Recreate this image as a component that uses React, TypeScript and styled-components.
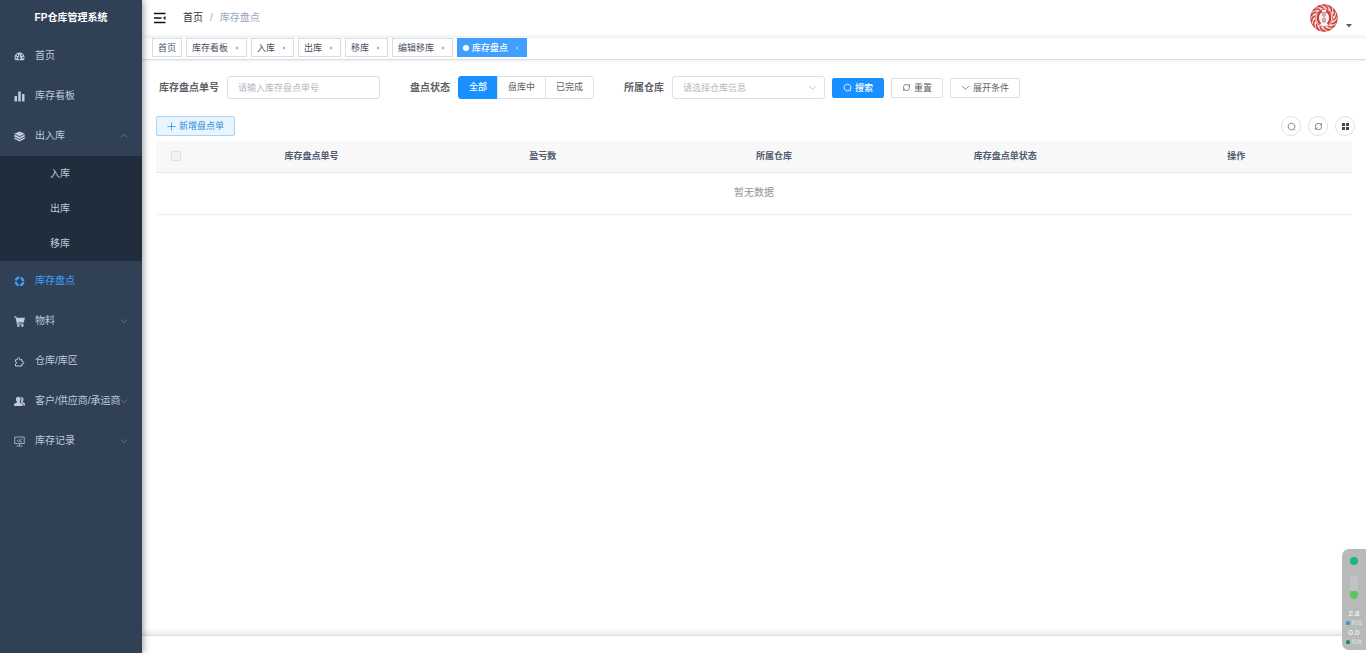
import React from "react";
import styled, { createGlobalStyle, css } from "styled-components";

const GlobalStyle = createGlobalStyle`
  * { box-sizing: border-box; }
  body {
    margin: 0;
    background: #fff;
    color: #606266;
    font-family: "Liberation Sans", "Noto Sans CJK SC", sans-serif;
    font-size: 10px;
    line-height: 14px;
  }
  button, input, select { font-family: inherit; }
  ul, ol { list-style: none; margin: 0; padding: 0; }
  a { color: inherit; text-decoration: none; }
  svg { display: block; flex: none; }
`;

/* ---------- shell ---------- */

const Shell = styled.div`
  display: flex;
  min-height: 100vh;
`;

const Sidebar = styled.aside`
  flex: 0 0 142px;
  min-width: 0;
  z-index: 2;
  background: #304156;
  color: #bfcbd9;
  box-shadow: 2px 0 6px rgba(0, 21, 41, 0.35);
`;

const Brand = styled.h1`
  margin: 0;
  height: 36px;
  color: #fff;
  font-size: 10px;
  font-weight: 700;
  line-height: 36px;
  text-align: center;
`;

const MenuLink = styled.a<{ $active?: boolean }>`
  display: flex;
  align-items: center;
  height: 40px;
  padding: 0 14px;
  color: ${(p) => (p.$active ? "#409eff" : "#bfcbd9")};
  white-space: nowrap;
`;

const MenuText = styled.span`
  flex: 1 1 0;
  min-width: 0;
  margin-left: 10px;
`;

const MenuArrow = styled.span`
  color: #74849a;
`;

const SubMenu = styled.ul`
  background: #1f2d3d;
`;

const SubLink = styled.a`
  display: block;
  height: 35px;
  padding-left: 50px;
  line-height: 35px;
`;

const Main = styled.div`
  display: flex;
  flex: 1 1 0;
  flex-direction: column;
  min-width: 0;
`;

/* ---------- top bars ---------- */

const NavBar = styled.header`
  display: flex;
  align-items: center;
  height: 36px;
  padding: 0 14px 0 12px;
  box-shadow: 0 1px 3px rgba(0, 21, 41, 0.1);
`;

const IconButton = styled.button`
  display: flex;
  padding: 0;
  border: 0;
  background: none;
  color: #111;
`;

const Crumbs = styled.ol`
  display: flex;
  flex: 1;
  gap: 7px;
  margin-left: 17px;
  color: #97a8be;
`;

const CrumbHome = styled.a`
  color: #303133;
`;

const CrumbSlash = styled.li`
  color: #a8acb4;
`;

const UserButton = styled(IconButton)`
  align-items: flex-end;
  gap: 8px;
  color: #5a5e66;
`;

const TagBar = styled.nav`
  display: flex;
  align-items: center;
  gap: 4px;
  height: 24px;
  padding: 0 10px;
  border-bottom: 1px solid #d8dce5;
  box-shadow: 0 1px 3px rgba(0, 0, 0, 0.08);
`;

const Tag = styled.div<{ $active?: boolean }>`
  display: flex;
  align-items: center;
  height: 19px;
  padding: 0 5px;
  border: 1px solid #d8dce5;
  color: #495060;
  font-size: 9px;
  white-space: nowrap;
  ${(p) =>
    p.$active &&
    css`
      border-color: #409eff;
      background: #409eff;
      color: #fff;
      font-weight: 500;
    `}
`;

const TagDot = styled.span`
  width: 6px;
  height: 6px;
  margin-right: 3px;
  border-radius: 50%;
  background: #fff;
`;

const TagClose = styled.button`
  display: flex;
  margin: 0 0 0 5px;
  padding: 2px;
  border: 0;
  background: none;
  color: inherit;
  opacity: 0.7;
`;

/* ---------- filter form ---------- */

const Content = styled.main`
  flex: 1;
  padding: 16px 14px 0;
`;

const Filters = styled.form`
  display: flex;
  flex-wrap: wrap;
  align-items: center;
  gap: 8px 30px;
  padding-left: 3px;
`;

const Field = styled.div`
  display: flex;
  align-items: center;
  gap: 8px;
`;

const fieldLabel = css`
  color: #606266;
  font-size: 10px;
  font-weight: 700;
`;

const FieldLabel = styled.label`
  ${fieldLabel}
`;

const GroupLabel = styled.span`
  ${fieldLabel}
`;

const control = css`
  width: 153px;
  height: 23px;
  padding: 0 10px;
  border: 1px solid #dcdfe6;
  border-radius: 3px;
  background: #fff;
  font-size: 9px;
`;

const TextInput = styled.input`
  ${control}
  &::placeholder {
    color: #b4b8c0;
    opacity: 1;
  }
`;

const SelectBox = styled.div`
  display: grid;
  align-items: center;
  > * {
    grid-area: 1 / 1;
  }
  > svg {
    justify-self: end;
    margin-right: 8px;
    color: #b4b8c0;
    pointer-events: none;
  }
`;

const Select = styled.select`
  ${control}
  appearance: none;
  color: #b4b8c0;
`;

const RadioGroup = styled.div`
  display: flex;
`;

const RadioOption = styled.label`
  position: relative;
  height: 23px;
  margin-left: -1px;
  padding: 0 10px;
  border: 1px solid #dcdfe6;
  background: #fff;
  font-size: 9px;
  line-height: 21px;
  &:first-child {
    margin-left: 0;
    border-radius: 3px 0 0 3px;
  }
  &:last-child {
    border-radius: 0 3px 3px 0;
  }
  &:has(input:checked) {
    border-color: #1890ff;
    background: #1890ff;
    color: #fff;
    font-weight: 500;
  }
`;

const RadioInput = styled.input`
  position: absolute;
  inset: 0;
  margin: 0;
  opacity: 0;
`;

const Actions = styled.div`
  display: flex;
  gap: 7px;
`;

const FilterEnd = styled.div`
  display: flex;
  flex-wrap: wrap;
  align-items: center;
  gap: 7px;
`;

type Tone = "primary" | "plain" | "default";

const tones: Record<Tone, ReturnType<typeof css>> = {
  primary: css`
    border-color: #1890ff;
    background: #1890ff;
    color: #fff;
    font-weight: 500;
  `,
  plain: css`
    border-color: #a9d3ee;
    background: #e8f4ff;
    color: #2d8fd6;
  `,
  default: css`
    border-color: #dcdfe6;
    background: #fff;
    color: #606266;
  `,
};

const Button = styled.button<{ $tone?: Tone }>`
  display: flex;
  align-items: center;
  gap: 3px;
  height: 20px;
  padding: 0 10px;
  border: 1px solid;
  border-radius: 2px;
  font-size: 9px;
  line-height: 14px;
  white-space: nowrap;
  ${(p) => tones[p.$tone ?? "default"]}
`;

/* ---------- table ---------- */

const Toolbar = styled.div`
  display: flex;
  align-items: center;
  justify-content: space-between;
  margin: 17px -3px 5px 0;
`;

const ToolGroup = styled.div`
  display: flex;
  gap: 7px;
`;

const RoundButton = styled.button`
  display: flex;
  align-items: center;
  justify-content: center;
  width: 20px;
  height: 20px;
  padding: 0;
  border: 1px solid #e0e1e4;
  border-radius: 50%;
  background: #fff;
  color: #606266;
`;

const Table = styled.table`
  width: 100%;
  border-collapse: collapse;
  table-layout: fixed;
`;

const HeadCell = styled.th`
  height: 31px;
  padding: 0;
  border-bottom: 1px solid #dfe6ec;
  background: #f8f8f9;
  color: #515a6e;
  font-size: 9px;
  font-weight: 700;
`;

const CheckCell = styled(HeadCell)`
  width: 40px;
`;

const CheckBox = styled.input`
  display: block;
  appearance: none;
  width: 10px;
  height: 10px;
  margin: 0 auto;
  border: 1px solid #dcdfe9;
  border-radius: 1px;
  background: #eff1fb;
`;

const EmptyCell = styled.td`
  height: 42px;
  padding: 0;
  border-bottom: 1px solid #ebeef5;
  color: #909399;
  text-align: center;
`;

const Footer = styled.footer`
  height: 18px;
  border-top: 1px solid #dcdee0;
  box-shadow: 0 -2px 6px rgba(0, 21, 41, 0.12);
`;

/* ---------- floating network meter ---------- */

const Meter = styled.aside`
  position: fixed;
  right: 0;
  bottom: 3px;
  z-index: 3;
  display: flex;
  flex-direction: column;
  align-items: center;
  width: 24px;
  height: 101px;
  padding-top: 8px;
  border-radius: 7px 0 0 7px;
  background: #b8baba;
  color: #fff;
  font-size: 8px;
  line-height: 10px;
`;

const MeterDot = styled.span`
  width: 8px;
  height: 8px;
  border-radius: 50%;
  background: #16b777;
`;

const MeterTube = styled.span`
  display: flex;
  align-items: flex-end;
  width: 8px;
  height: 24px;
  margin: 10px 0;
  border-radius: 4px;
  background: #c1c2c3;
  overflow: hidden;
  &::after {
    content: "";
    width: 8px;
    height: 8px;
    background: #5cc45a;
    border-radius: 2px 2px 4px 4px;
  }
`;

const Rate = styled.div`
  height: 19px;
  text-align: center;
`;

const RateUnit = styled.div<{ $color: string }>`
  display: flex;
  align-items: center;
  gap: 2px;
  font-size: 7px;
  line-height: 7px;
  color: #e4e6e6;
  &::before {
    content: "";
    width: 4px;
    height: 4px;
    border-radius: 2px 2px 1px 1px;
    background: ${(p) => p.$color};
  }
`;

/* ---------- icons ---------- */

const Stroke = ({ d, size = 9, w = 1 }: { d: string; size?: number; w?: number }) => (
  <svg width={size} height={size} viewBox="0 0 12 12" fill="none" stroke="currentColor" strokeWidth={w} aria-hidden="true">
    <path d={d} />
  </svg>
);

const DOWN = "M1.5 4 6 8.5 10.5 4";
const UP = "M1.5 8 6 3.5 10.5 8";
const PLUS = "M6 .5v11M.5 6h11";
const CROSS = "M2 2l8 8M10 2l-8 8";
const SEARCH = "M6 1.500a4.500 4.500 0 1 0 .01 0zM9 9.300l1.800 1.700";
const REFRESH = "M2 7.500V5.500a3.500 3.500 0 0 1 3.500-3.500h1.500a3 3 0 0 1 2.600 1.600M10 4.500v2a3.500 3.500 0 0 1-3.500 3.500H5A3 3 0 0 1 2.400 8.400M9.800 1.600v2.200H7.700M2.200 10.400V8.200h2.100";

const Glyph = ({ children }: { children: React.ReactNode }) => (
  <svg width="11" height="11" viewBox="0 0 22 22" fill="currentColor" aria-hidden="true">
    {children}
  </svg>
);

const icons = {
  dashboard: (
    <Glyph>
      <path
        fillRule="evenodd"
        d="M11 3a10 10 0 0 0-10 10c0 2 .5 4 1.500 5.500h17A10.500 10.500 0 0 0 21 13 10 10 0 0 0 11 3zM4.500 11.500a1.500 1.500 0 1 0 .01 0zM7 6.500a1.500 1.500 0 1 0 .01 0zM16 6.800a1.400 1.400 0 1 0 .01 0zM18 11.500a1.500 1.500 0 1 0 .01 0zM11.500 6.500l1 .3-.8 5.200a2.400 2.400 0 1 1-1.600-.2z"
      />
    </Glyph>
  ),
  chart: (
    <Glyph>
      <path d="M1 10h5v11H1zM8.500 1h5v20h-5zM16 6h5v15h-5z" />
    </Glyph>
  ),
  layers: (
    <Glyph>
      <path d="M11 1l10.500 4.500L11 10.500.5 5.500z" />
      <path d="M.5 7.200L11 12.200l10.500-5v3.800L11 16.200.5 11zM.5 12.500L11 17.500l10.500-5v3L11 20.800.5 15.500z" />
    </Glyph>
  ),
  ring: (
    <Glyph>
      <circle cx="11" cy="11" r="7.600" fill="none" stroke="currentColor" strokeWidth="4.400" strokeDasharray="8.940 3" strokeDashoffset="-1.500" />
    </Glyph>
  ),
  cart: (
    <Glyph>
      <path d="M0 1h4.500l1 2.500H22L19.500 13H7.500l.5 2h11v2H6L3 3H0zM6.500 17.500h4.500v4H6.500zM14.500 17.500H19v4h-4.500z" />
    </Glyph>
  ),
  puzzle: (
    <Glyph>
      <path d="M3 7.500h4c-1.500-6 6-6 4.500 0H16v4c5-1.400 5 5.200 0 4V20H3v-4.500c3 0 3-4 0-4z" fill="none" stroke="currentColor" strokeWidth="2" />
    </Glyph>
  ),
  users: (
    <Glyph>
      <path d="M8.500 1.500c3 0 4.800 2.200 4.800 5 0 2-.8 3.700-1.800 4.700v1.600l4.300 2.400c1 .6 1.500 1.600 1.500 2.800v2H0v-2c0-1.200.5-2.200 1.500-2.800l4.300-2.400v-1.600C4.800 10.200 3.700 8.500 3.700 6.500c0-2.800 1.800-5 4.800-5z" />
      <path d="M14 2c3 0 5 2 5 5 0 1.700-.7 3-1.500 4v1l3 2c1 .6 1.500 1.500 1.500 2.700v2.300h-3.200c0-2-.5-3.700-2-4.500L13.500 12.500c1.700-2.800 2.200-7 .5-10.500z" />
    </Glyph>
  ),
  monitor: (
    <Glyph>
      <path d="M1.500 2h19v13h-19zM11 15v4M5 20h12M5.500 8l3.500 3.500L16.500 5M9 7.500h2M12 11.500h4" fill="none" stroke="currentColor" strokeWidth="1.500" />
    </Glyph>
  ),
};

const FoldIcon = () => (
  <svg width="12" height="12" viewBox="0 0 12 12" fill="none" stroke="currentColor" aria-hidden="true">
    <path d="M0 1.500h11.500M0 6h7.500M0 10.500h11.500" strokeWidth="1.300" />
    <path d="M11.500 4v4L9 6z" fill="currentColor" stroke="none" />
  </svg>
);

const GridIcon = () => (
  <svg width="7" height="7" viewBox="0 0 7 7" fill="#444" aria-hidden="true">
    <path d="M0 0h3v3H0zM4 0h3v3H4zM0 4h3v3H0zM4 4h3v3H4z" />
  </svg>
);

const strands = Array.from({ length: 14 }, (_, i) => (i * 360) / 14);

const Avatar = () => (
  <svg width="28" height="28" viewBox="0 0 28 28" fill="none" stroke="#c8403c" aria-hidden="true">
    <circle cx="14" cy="14" r="13.400" fill="#f9dfdc" strokeWidth="0.800" />
    {strands.map((a) => (
      <path key={a} d="M13 1c3 .6 4.500 2 5 4.600" strokeWidth="1.500" transform={`rotate(${a} 14 14)`} />
    ))}
    <circle cx="14" cy="14" r="8.600" fill="#fdf3f1" strokeWidth="0.600" />
    <path d="M12 7c-5 1.500-5.500 10-1.500 13M16 7c5 1.500 5.500 10 1.500 13" strokeWidth="2.400" />
    <path d="M12.500 8.500h3v3.500h-3zM12.500 10.200h3M12.500 14.500h3v3.500h-3zM12.500 16.200h3M14 8v11" stroke="#b0708a" strokeWidth="0.600" />
  </svg>
);

const Caret = () => (
  <svg width="6" height="8" viewBox="0 0 6 8" fill="currentColor" aria-hidden="true">
    <path d="M0 0h6L3 3.500z" />
  </svg>
);

/* ---------- data ---------- */

type MenuItem = {
  text: string;
  icon: keyof typeof icons;
  arrow?: "up" | "down";
  active?: boolean;
  children?: string[];
};

const menu: MenuItem[] = [
  { text: "首页", icon: "dashboard" },
  { text: "库存看板", icon: "chart" },
  { text: "出入库", icon: "layers", arrow: "up", children: ["入库", "出库", "移库"] },
  { text: "库存盘点", icon: "ring", active: true },
  { text: "物料", icon: "cart", arrow: "down" },
  { text: "仓库/库区", icon: "puzzle" },
  { text: "客户/供应商/承运商", icon: "users", arrow: "down" },
  { text: "库存记录", icon: "monitor", arrow: "down" },
];

const tags = ["首页", "库存看板", "入库", "出库", "移库", "编辑移库", "库存盘点"];
const statuses = ["全部", "盘库中", "已完成"];
const columns = ["库存盘点单号", "盈亏数", "所属仓库", "库存盘点单状态", "操作"];

export default function App() {
  return (
    <Shell>
      <GlobalStyle />
      <Sidebar>
        <Brand>FP仓库管理系统</Brand>
        <ul>
          {menu.map((item) => (
            <li key={item.text}>
              <MenuLink href="#" $active={item.active}>
                {icons[item.icon]}
                <MenuText>{item.text}</MenuText>
                {item.arrow && (
                  <MenuArrow>
                    <Stroke d={item.arrow === "up" ? UP : DOWN} size={8} w={1.2} />
                  </MenuArrow>
                )}
              </MenuLink>
              {item.children && (
                <SubMenu>
                  {item.children.map((c) => (
                    <li key={c}>
                      <SubLink href="#">{c}</SubLink>
                    </li>
                  ))}
                </SubMenu>
              )}
            </li>
          ))}
        </ul>
      </Sidebar>

      <Main>
        <NavBar>
          <IconButton type="button" aria-label="收起菜单">
            <FoldIcon />
          </IconButton>
          <Crumbs>
            <li>
              <CrumbHome href="#">首页</CrumbHome>
            </li>
            <CrumbSlash>/</CrumbSlash>
            <li>库存盘点</li>
          </Crumbs>
          <UserButton type="button" aria-label="用户菜单">
            <Avatar />
            <Caret />
          </UserButton>
        </NavBar>

        <TagBar>
          {tags.map((t, i) => {
            const active = i === tags.length - 1;
            return (
              <Tag key={t} $active={active}>
                {active && <TagDot />}
                <a href="#">{t}</a>
                {i > 0 && (
                  <TagClose type="button" aria-label={`关闭${t}`}>
                    <Stroke d={CROSS} size={4} w={2} />
                  </TagClose>
                )}
              </Tag>
            );
          })}
        </TagBar>

        <Content>
          <Filters>
            <Field>
              <FieldLabel htmlFor="order-no">库存盘点单号</FieldLabel>
              <TextInput id="order-no" placeholder="请输入库存盘点单号" />
            </Field>
            <Field role="radiogroup" aria-labelledby="status-label">
              <GroupLabel id="status-label">盘点状态</GroupLabel>
              <RadioGroup>
                {statuses.map((s, i) => (
                  <RadioOption key={s}>
                    <RadioInput type="radio" name="status" defaultChecked={i === 0} />
                    {s}
                  </RadioOption>
                ))}
              </RadioGroup>
            </Field>
            <FilterEnd>
              <Field>
                <FieldLabel htmlFor="warehouse">所属仓库</FieldLabel>
                <SelectBox>
                  <Select id="warehouse">
                    <option>请选择仓库信息</option>
                  </Select>
                  <Stroke d={DOWN} />
                </SelectBox>
              </Field>
              <Actions>
                <Button type="button" $tone="primary">
                  <Stroke d={SEARCH} w={1.2} />
                  搜索
                </Button>
                <Button type="button">
                  <Stroke d={REFRESH} />
                  重置
                </Button>
                <Button type="button">
                  <Stroke d={DOWN} />
                  展开条件
                </Button>
              </Actions>
            </FilterEnd>
          </Filters>

          <Toolbar>
            <Button type="button" $tone="plain">
              <Stroke d={PLUS} />
              新增盘点单
            </Button>
            <ToolGroup>
              <RoundButton type="button" aria-label="搜索">
                <Stroke d={SEARCH} />
              </RoundButton>
              <RoundButton type="button" aria-label="刷新">
                <Stroke d={REFRESH} />
              </RoundButton>
              <RoundButton type="button" aria-label="显示列">
                <GridIcon />
              </RoundButton>
            </ToolGroup>
          </Toolbar>

          <Table>
            <thead>
              <tr>
                <CheckCell>
                  <CheckBox type="checkbox" aria-label="全选" disabled />
                </CheckCell>
                {columns.map((c) => (
                  <HeadCell key={c} scope="col">
                    {c}
                  </HeadCell>
                ))}
              </tr>
            </thead>
            <tbody>
              <tr>
                <EmptyCell colSpan={columns.length + 1}>暂无数据</EmptyCell>
              </tr>
            </tbody>
          </Table>
        </Content>
        <Footer />
      </Main>

      <Meter>
        <MeterDot />
        <MeterTube />
        <Rate>
          2.8
          <RateUnit $color="#2f9bd8">K/s</RateUnit>
        </Rate>
        <Rate>
          0.0
          <RateUnit $color="#1f8a6c">K/s</RateUnit>
        </Rate>
      </Meter>
    </Shell>
  );
}
